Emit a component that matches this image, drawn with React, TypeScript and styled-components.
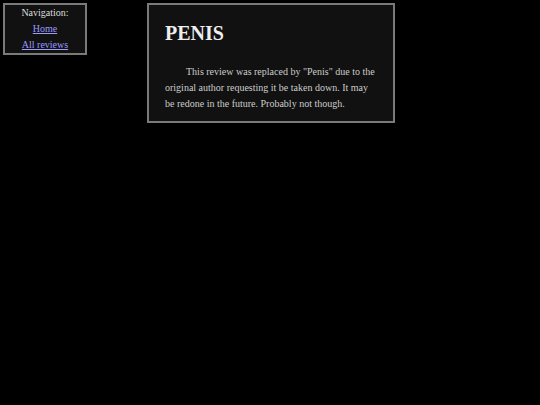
import React from "react";
import styled, { createGlobalStyle } from "styled-components";

const GlobalStyle = createGlobalStyle`
  html, body {
    margin: 0;
    background-color: #000;
    font-family: "Liberation Serif", "Times New Roman", serif;
  }
`;

const Page = styled.div`
  display: flex;
  align-items: flex-start;
  gap: 60px;
  padding: 3px;
  min-height: 399px;
  background-color: #000;
`;

const Box = styled.div`
  background-color: #111;
  border: 2px solid #7a7a7a;
  box-sizing: border-box;
  color: #ddd;
`;

const Nav = styled(Box)`
  width: 84px;
  padding: 0 0 0;
  display: flex;
  flex-direction: column;
  align-items: center;
  font-size: 10px;
  line-height: 16px;
`;

const NavLink = styled.a`
  color: #9a9aff;
  text-decoration: underline;
`;

const Main = styled(Box)`
  width: 248px;
  padding: 17px 16px 9px 16px;
`;

const Title = styled.h1`
  margin: 0 0 19px;
  font-size: 20px;
  line-height: 23px;
  font-weight: bold;
  color: #eee;
`;

const Text = styled.p`
  margin: 0;
  font-size: 10px;
  line-height: 16px;
  text-indent: 21px;
  color: #ccc;
`;

const App = () => {
  return (
    <>
      <GlobalStyle />
      <Page>
        <Nav>
          <span>Navigation:</span>
          <NavLink href="#">Home</NavLink>
          <NavLink href="#">All reviews</NavLink>
        </Nav>
        <Main>
          <Title>PENIS</Title>
          <Text>
            This review was replaced by "Penis" due to the original author
            requesting it be taken down. It may be redone in the future.
            Probably not though.
          </Text>
        </Main>
      </Page>
    </>
  );
};

export default App;
